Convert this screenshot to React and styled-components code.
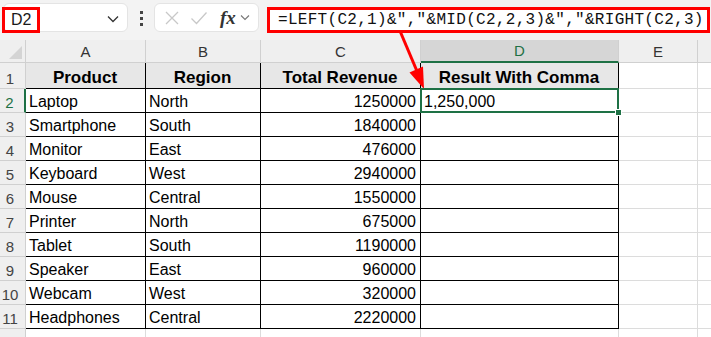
import React from 'react';
import styled, { createGlobalStyle } from 'styled-components';

const GlobalStyle = createGlobalStyle`
  html, body {
    margin: 0;
    padding: 0;
    background: #ffffff;
    overflow: hidden;
  }
  body {
    font-family: "Liberation Sans", Arial, sans-serif;
  }
`;

const GREEN = '#1e7145';

const rows = [
  ['Laptop', 'North', '1250000', '1,250,000'],
  ['Smartphone', 'South', '1840000', ''],
  ['Monitor', 'East', '476000', ''],
  ['Keyboard', 'West', '2940000', ''],
  ['Mouse', 'Central', '1550000', ''],
  ['Printer', 'North', '675000', ''],
  ['Tablet', 'South', '1190000', ''],
  ['Speaker', 'East', '960000', ''],
  ['Webcam', 'West', '320000', ''],
  ['Headphones', 'Central', '2220000', ''],
];

const App = () => {
  return (
    <>
      <GlobalStyle />
      <Window>
        <Toolbar>
          <NameBox>
            <NameMark>D2</NameMark>
            <Chevron width="12" height="8" viewBox="0 0 12 8">
              <path d="M1 1.5 L6 6.5 L11 1.5" fill="none" stroke="#333" strokeWidth="1.3" />
            </Chevron>
          </NameBox>
          <Dots>
            <i />
            <i />
            <i />
          </Dots>
          <FxBox>
            <svg width="16" height="16" viewBox="0 0 16 16">
              <path d="M2 2 L14 14 M14 2 L2 14" stroke="#c8c8c8" strokeWidth="1.3" />
            </svg>
            <svg width="18" height="16" viewBox="0 0 18 16">
              <path d="M1.5 8.5 L6.5 13.5 L16.5 2.5" fill="none" stroke="#c8c8c8" strokeWidth="1.3" />
            </svg>
            <FxLabel>fx</FxLabel>
            <svg width="10" height="7" viewBox="0 0 10 7">
              <path d="M1 1.5 L5 5.5 L9 1.5" fill="none" stroke="#777" strokeWidth="1.1" />
            </svg>
          </FxBox>
          <FormulaBar>
            <FormulaText>=LEFT(C2,1)&amp;","&amp;MID(C2,2,3)&amp;","&amp;RIGHT(C2,3)</FormulaText>
          </FormulaBar>
        </Toolbar>

        <Sheet>
          <Corner />
          <ColHead>A</ColHead>
          <ColHead>B</ColHead>
          <ColHead>C</ColHead>
          <ColHead $active>D</ColHead>
          <ColHead>E</ColHead>
          <ColHead />

          <RowHead>1</RowHead>
          <Cell $head>Product</Cell>
          <Cell $head>Region</Cell>
          <Cell $head>Total Revenue</Cell>
          <Cell $head>Result With Comma</Cell>
          <Blank />
          <Blank />

          {rows.map((r, i) => (
            <React.Fragment key={r[0]}>
              <RowHead $active={i === 0}>{i + 2}</RowHead>
              <Cell>{r[0]}</Cell>
              <Cell>{r[1]}</Cell>
              <Cell $num>{r[2]}</Cell>
              <Cell $selected={i === 0}>{r[3]}</Cell>
              <Blank />
              <Blank />
            </React.Fragment>
          ))}

          <RowHead>12</RowHead>
          <Blank />
          <Blank />
          <Blank />
          <Blank />
          <Blank />
          <Blank />
        </Sheet>

        <Arrow width="711" height="337" viewBox="0 0 711 337">
          <line x1="400" y1="31" x2="416.5" y2="70" stroke="#ff0000" strokeWidth="3" />
          <polygon points="424,89 423,66.5 409.5,72.5" fill="#ff0000" />
        </Arrow>
      </Window>
    </>
  );
};

const Window = styled.div`
  position: relative;
  width: 711px;
  height: 337px;
  overflow: hidden;
  background: #ffffff;
`;

const Toolbar = styled.div`
  display: flex;
  align-items: center;
  height: 40px;
  padding: 0 0 0 3px;
  box-sizing: border-box;
  background: #f3f3f3;
`;

const NameBox = styled.div`
  position: relative;
  flex-shrink: 0;
  display: flex;
  align-items: center;
  justify-content: space-between;
  width: 125px;
  height: 29px;
  margin-top: -5px;
  box-sizing: border-box;
  background: #ffffff;
  border: 1px solid #e4e4e4;
  border-radius: 6px;
  padding-right: 8px;
`;

const NameMark = styled.span`
  display: flex;
  align-items: center;
  margin-left: -2px;
  margin-top: 5px;
  height: 26px;
  padding: 0 6px 0 6px;
  box-sizing: border-box;
  border: 3px solid #ff0000;
  font-size: 16px;
  color: #1a1a1a;
`;

const Chevron = styled.svg`
  display: block;
  margin-top: 2px;
`;

const Dots = styled.div`
  flex-shrink: 0;
  display: flex;
  flex-direction: column;
  gap: 3px;
  margin: -4px 11px 0 12px;

  i {
    display: block;
    width: 3px;
    height: 3px;
    background: #444;
  }
`;

const FxBox = styled.div`
  flex-shrink: 0;
  display: flex;
  align-items: center;
  gap: 10px;
  width: 105px;
  height: 29px;
  margin-top: -5px;
  box-sizing: border-box;
  padding: 0 6px 0 9px;
  background: #ffffff;
  border: 1px solid #e4e4e4;
  border-radius: 6px;
`;

const FxLabel = styled.span`
  font-family: "Liberation Serif", "DejaVu Serif", serif;
  font-style: italic;
  font-weight: bold;
  font-size: 19px;
  color: #333;
  margin-left: 2px;
  margin-right: -6px;
`;

const FormulaBar = styled.div`
  flex-shrink: 0;
  display: flex;
  align-items: center;
  margin-left: 8px;
  width: 443px;
  height: 26px;
  box-sizing: border-box;
  border: 3px solid #ff0000;
  background: #ffffff;
  padding-left: 8px;
  overflow: hidden;
`;

const FormulaText = styled.span`
  font-family: "Liberation Mono", "DejaVu Sans Mono", monospace;
  font-size: 16px;
  letter-spacing: 0.3px;
  color: #111;
  white-space: nowrap;
`;

const Sheet = styled.div`
  display: grid;
  grid-template-columns: 26px 120px 115px 160px 198px 79px 60px;
  grid-template-rows: 23px 26px repeat(10, 24px) 24px;
  font-size: 16px;
  color: #000;
`;

const Corner = styled.div`
  position: relative;
  background: #efefef;
  border-right: 1px solid #d0d0d0;
  border-bottom: 1px solid #d0d0d0;

  &::after {
    content: '';
    position: absolute;
    right: 3px;
    bottom: 3px;
    border-left: 13px solid transparent;
    border-bottom: 13px solid #d4d4d4;
  }
`;

const ColHead = styled.div`
  display: flex;
  align-items: center;
  justify-content: center;
  background: ${(p) => (p.$active ? '#d6d6d6' : '#efefef')};
  color: ${(p) => (p.$active ? GREEN : '#333')};
  border-right: 1px solid #d0d0d0;
  border-bottom: ${(p) => (p.$active ? `2px solid ${GREEN}` : '1px solid #d0d0d0')};
  font-size: 15px;
`;

const RowHead = styled.div`
  display: flex;
  align-items: flex-end;
  justify-content: center;
  padding: 0 5px 1px 0;
  background: #efefef;
  color: ${(p) => (p.$active ? GREEN : '#444')};
  border-right: ${(p) => (p.$active ? `2px solid ${GREEN}` : '1px solid #d0d0d0')};
  border-bottom: 1px solid #d0d0d0;
  font-size: 15px;
`;

const Cell = styled.div`
  position: relative;
  display: flex;
  align-items: flex-end;
  justify-content: ${(p) => (p.$head ? 'center' : p.$num ? 'flex-end' : 'flex-start')};
  padding: 0 4px 1px 3px;
  background: ${(p) => (p.$head ? '#e7e7e7' : '#ffffff')};
  font-weight: ${(p) => (p.$head ? 'bold' : 'normal')};
  font-size: ${(p) => (p.$head ? '17px' : '16px')};
  line-height: 18px;
  border-right: 1px solid #000;
  border-bottom: 1px solid #000;
  white-space: nowrap;

  ${(p) =>
    p.$selected &&
    `
    &::before {
      content: '';
      position: absolute;
      top: -1px;
      left: -1px;
      right: -1px;
      bottom: -1px;
      border: 2px solid ${GREEN};
      z-index: 1;
    }
    &::after {
      content: '';
      position: absolute;
      right: -4px;
      bottom: -4px;
      width: 5px;
      height: 5px;
      background: ${GREEN};
      border: 1px solid #ffffff;
      z-index: 2;
    }
  `}
`;

const Blank = styled.div`
  background: #ffffff;
  border-right: 1px solid #dcdcdc;
  border-bottom: 1px solid #dcdcdc;
`;

const Arrow = styled.svg`
  position: absolute;
  top: 0;
  left: 0;
  pointer-events: none;
`;

export default App;
